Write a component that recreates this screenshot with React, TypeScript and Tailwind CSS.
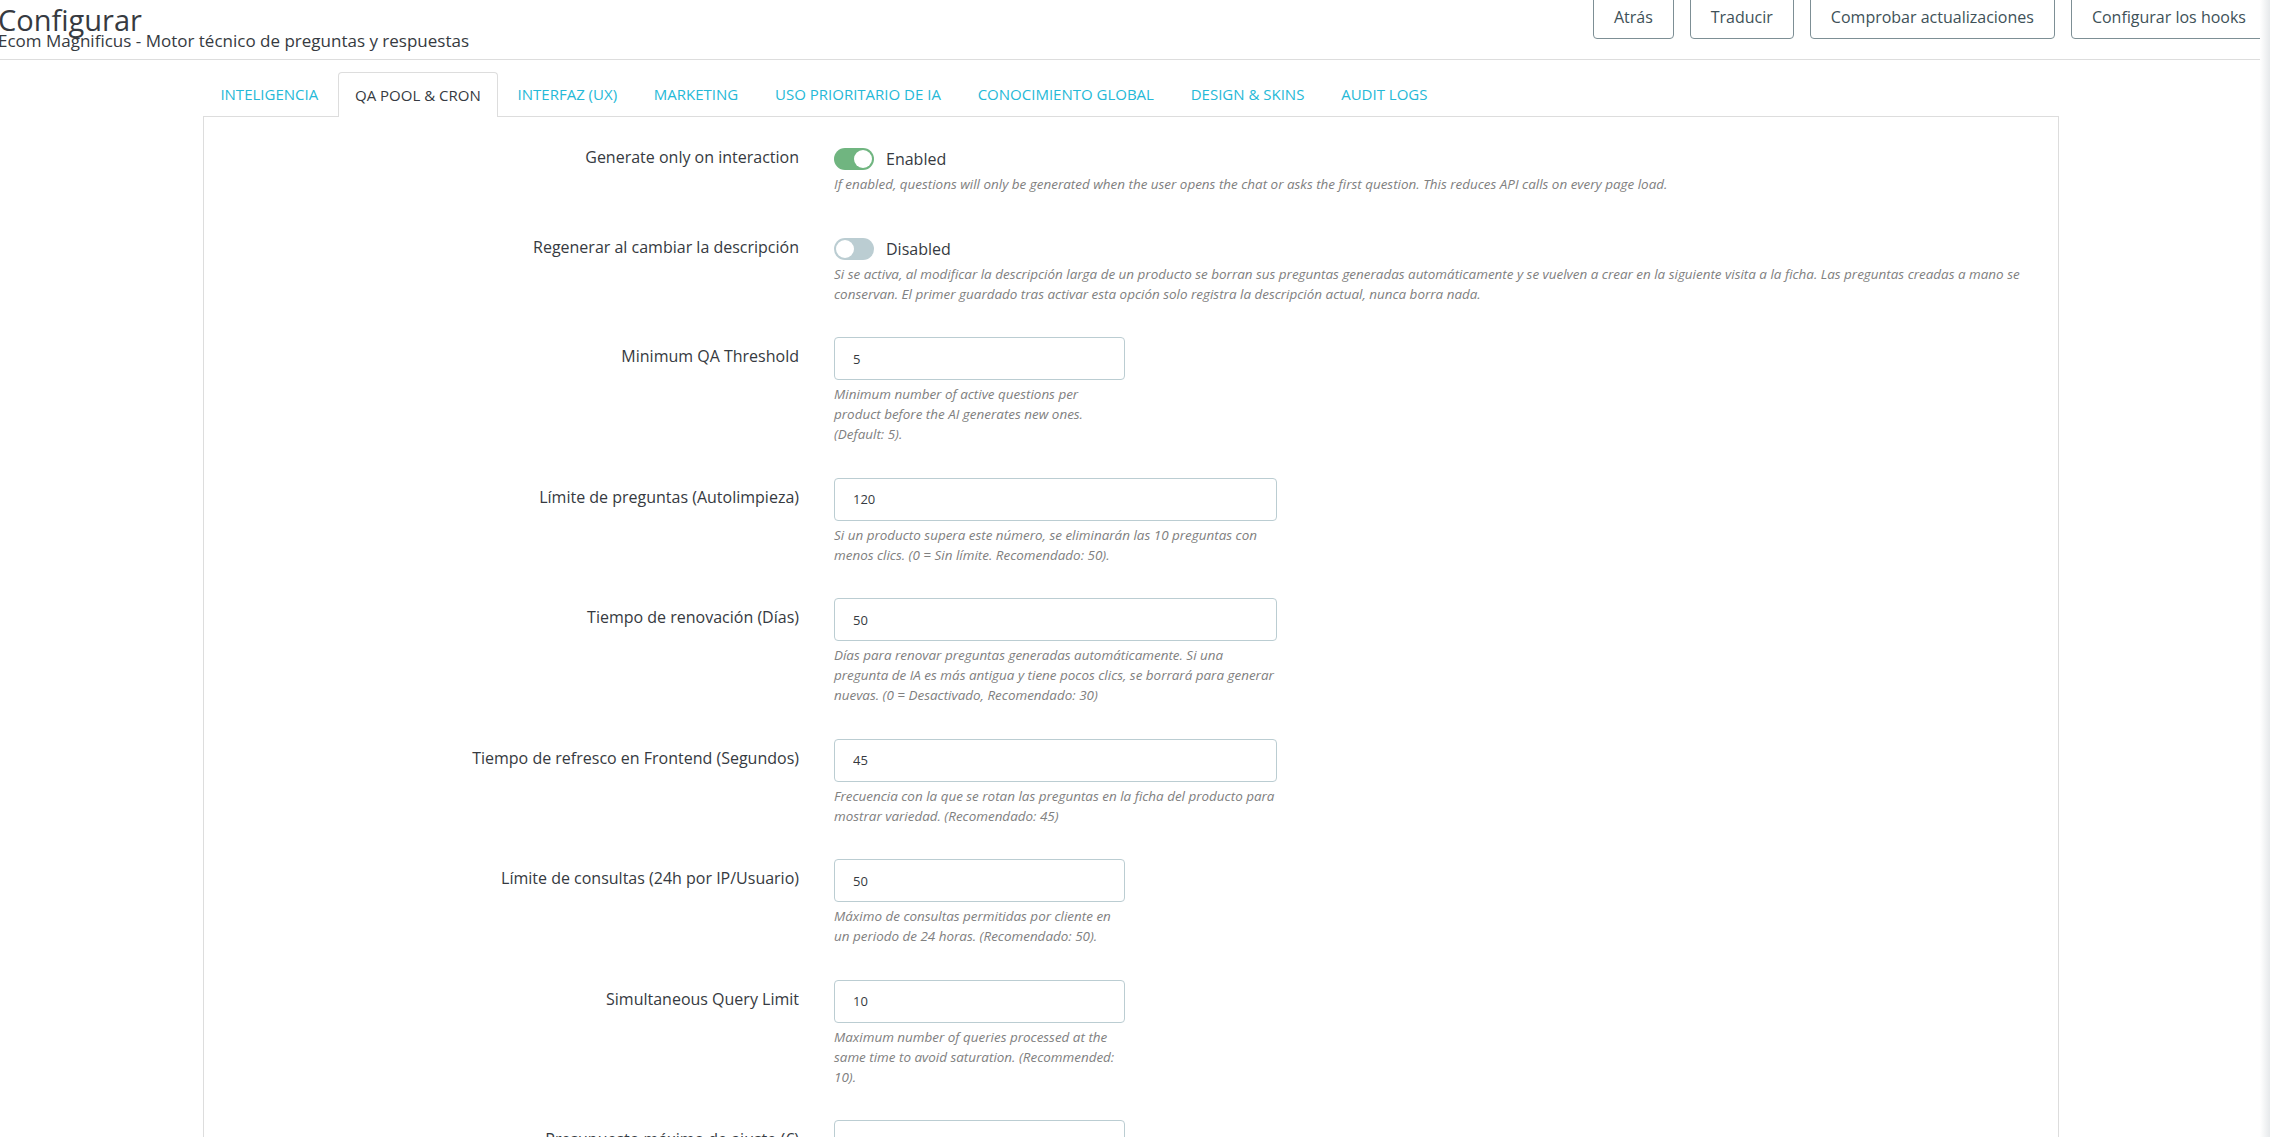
import React from "react";

type Row =
  | { kind: "toggle"; label: string; on: boolean; help: string }
  | { kind: "input"; label: string; value: string; wide: boolean; help: string };

const rows: Row[] = [
  {
    kind: "toggle",
    label: "Generate only on interaction",
    on: true,
    help: "If enabled, questions will only be generated when the user opens the chat or asks the first question. This reduces API calls on every page load.",
  },
  {
    kind: "toggle",
    label: "Regenerar al cambiar la descripción",
    on: false,
    help: "Si se activa, al modificar la descripción larga de un producto se borran sus preguntas generadas automáticamente y se vuelven a crear en la siguiente visita a la ficha. Las preguntas creadas a mano se conservan. El primer guardado tras activar esta opción solo registra la descripción actual, nunca borra nada.",
  },
  {
    kind: "input",
    label: "Minimum QA Threshold",
    value: "5",
    wide: false,
    help: "Minimum number of active questions per product before the AI generates new ones. (Default: 5).",
  },
  {
    kind: "input",
    label: "Límite de preguntas (Autolimpieza)",
    value: "120",
    wide: true,
    help: "Si un producto supera este número, se eliminarán las 10 preguntas con menos clics. (0 = Sin límite. Recomendado: 50).",
  },
  {
    kind: "input",
    label: "Tiempo de renovación (Días)",
    value: "50",
    wide: true,
    help: "Días para renovar preguntas generadas automáticamente. Si una pregunta de IA es más antigua y tiene pocos clics, se borrará para generar nuevas. (0 = Desactivado, Recomendado: 30)",
  },
  {
    kind: "input",
    label: "Tiempo de refresco en Frontend (Segundos)",
    value: "45",
    wide: true,
    help: "Frecuencia con la que se rotan las preguntas en la ficha del producto para mostrar variedad. (Recomendado: 45)",
  },
  {
    kind: "input",
    label: "Límite de consultas (24h por IP/Usuario)",
    value: "50",
    wide: false,
    help: "Máximo de consultas permitidas por cliente en un periodo de 24 horas. (Recomendado: 50).",
  },
  {
    kind: "input",
    label: "Simultaneous Query Limit",
    value: "10",
    wide: false,
    help: "Maximum number of queries processed at the same time to avoid saturation. (Recommended: 10).",
  },
  {
    kind: "input",
    label: "Presupuesto máximo de ajuste (€)",
    value: "0",
    wide: false,
    help: "Presupuesto máximo mensual destinado a ajustes automáticos.",
  },
];

const tabs = [
  "Inteligencia",
  "QA Pool & Cron",
  "Interfaz (UX)",
  "Marketing",
  "Uso prioritario de IA",
  "Conocimiento global",
  "Design & Skins",
  "Audit logs",
];

function Toggle({ on }: { on: boolean }) {
  return (
    <div
      className={
        on
          ? "flex h-[22px] w-[40px] items-center justify-end rounded-full bg-[#70b580] p-[2px]"
          : "flex h-[22px] w-[40px] items-center justify-start rounded-full bg-[#bbcdd2] p-[2px]"
      }
    >
      <div className="h-[18px] w-[18px] rounded-full bg-white" />
    </div>
  );
}

export default function App() {
  return (
    <div className="relative h-[1137px] w-[2270px] overflow-hidden bg-white font-['Open_Sans',sans-serif] text-[#363a41]">
      <header className="flex h-[60px] items-start justify-between border-b border-[#dddddd] pr-[3px]">
        <div className="-ml-[2px] pt-[9px]">
          <h1 className="text-[29px] font-normal leading-[22px]">Configurar</h1>
          <div className="text-[17px] leading-[20px]">
            Ecom Magnificus - Motor técnico de preguntas y respuestas
          </div>
        </div>
        <div className="-mt-[5px] flex gap-[16px]">
          {["Atrás", "Traducir", "Comprobar actualizaciones", "Configurar los hooks"].map((b) => (
            <button
              key={b}
              className="h-[44px] rounded-[4px] border border-[#7d8f95] bg-white px-[20px] text-[16px] text-[#3e5158]"
            >
              {b}
            </button>
          ))}
        </div>
      </header>

      <div className="pl-[203px] pr-[211px] pt-[12px]">
        <div className="flex items-end gap-[2px]">
          {tabs.map((t, i) =>
            i === 1 ? (
              <div
                key={t}
                className="relative z-10 -mb-px flex h-[45px] items-center rounded-t-[4px] border border-b-0 border-[#dddddd] bg-white px-[16.5px] text-[15px] uppercase text-[#363a41]"
              >
                {t}
              </div>
            ) : (
              <div
                key={t}
                className="flex h-[44px] items-center px-[17.4px] text-[15px] uppercase text-[#25b9d7]"
              >
                {t}
              </div>
            )
          )}
        </div>

        <div className="h-[1200px] border border-[#dddddd] pt-[21px]">
          {rows.map((r) => (
            <div key={r.label} className="mb-[33.5px] flex">
              <div className="w-[595px] shrink-0 pt-[8px] text-right text-[16px] leading-[22px] text-[#363a41]">
                {r.label}
              </div>
              <div className="ml-[35px] w-[1196px]">
                {r.kind === "toggle" ? (
                  <>
                    <div className="mt-[10px] flex h-[22px] items-center gap-[12px]">
                      <Toggle on={r.on} />
                      <span className="text-[16px] leading-[22px]">{r.on ? "Enabled" : "Disabled"}</span>
                    </div>
                    <p className="mt-[4px] text-[13.45px] italic leading-[20px] text-[#808080]">{r.help}</p>
                  </>
                ) : (
                  <div className={r.wide ? "w-[443px]" : "w-[291px]"}>
                    <input
                      readOnly
                      defaultValue={r.value}
                      className="h-[43px] w-full rounded-[4px] border border-[#bbcdd2] bg-white px-[18px] text-[13px] text-[#363a41] outline-none"
                    />
                    <p className="mt-[4px] text-[13.45px] italic leading-[20px] text-[#808080]">{r.help}</p>
                  </div>
                )}
              </div>
            </div>
          ))}
        </div>
      </div>

      <div className="pointer-events-none absolute right-0 top-0 h-full w-[10px] bg-gradient-to-r from-white to-[#e6e9eb]" />
    </div>
  );
}
